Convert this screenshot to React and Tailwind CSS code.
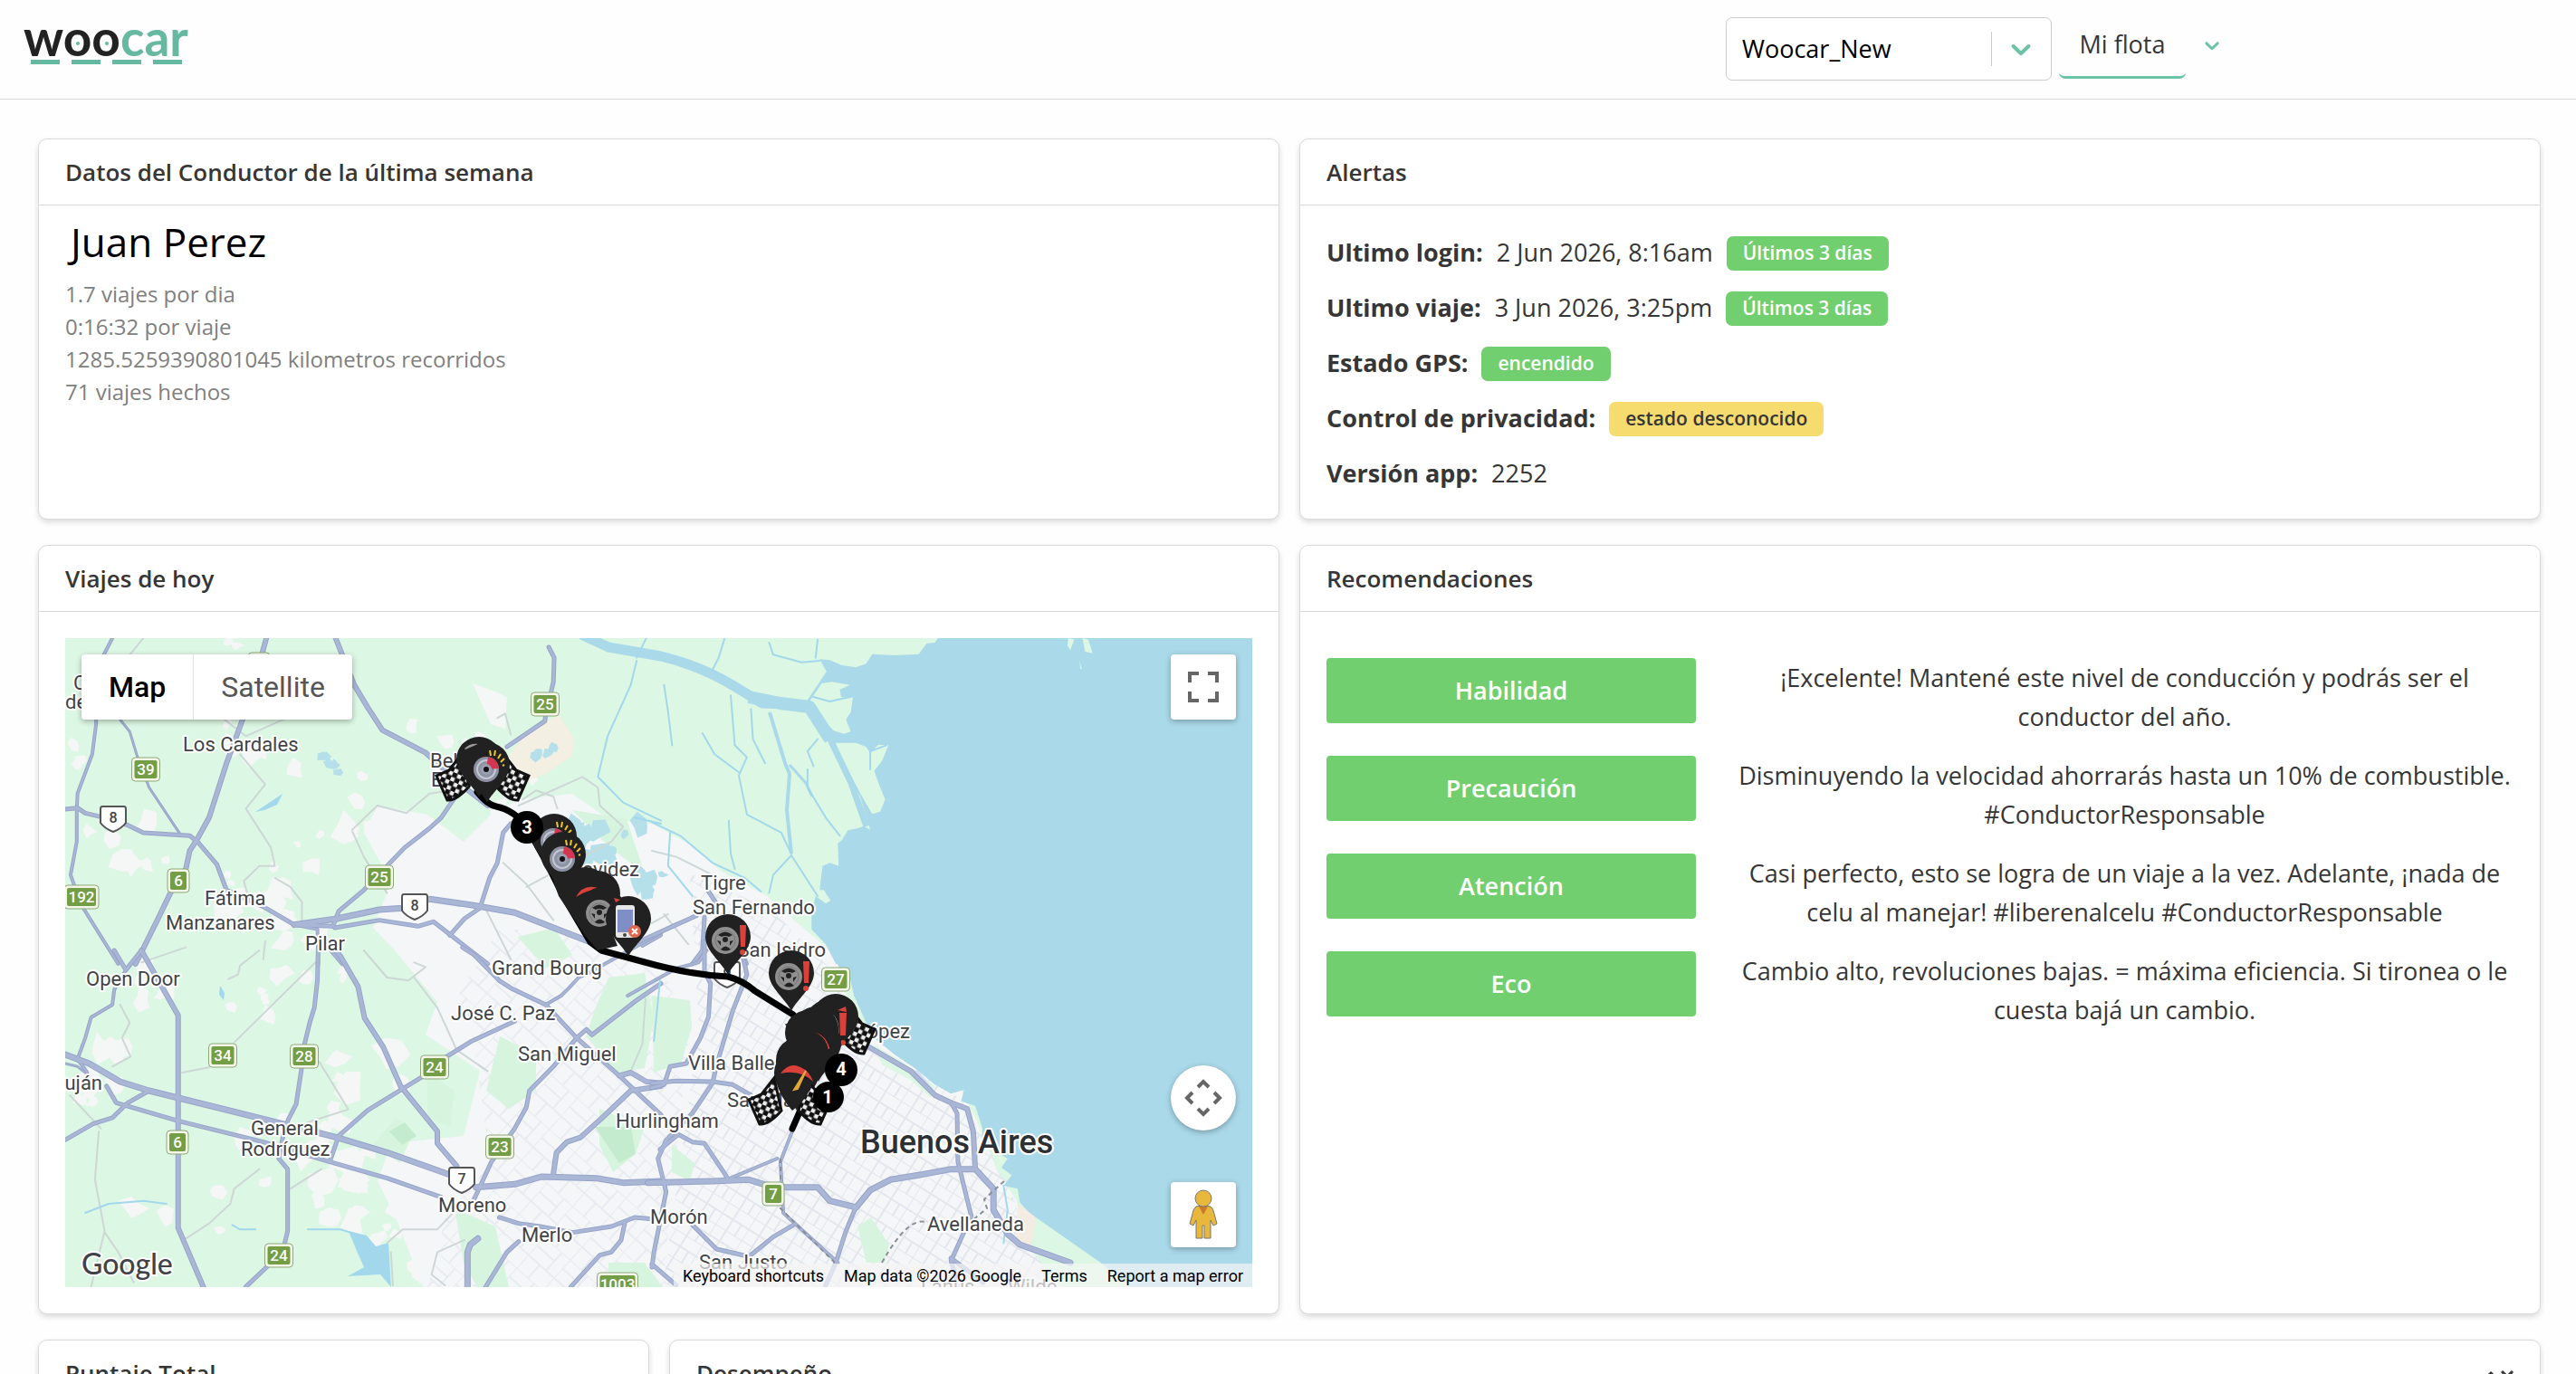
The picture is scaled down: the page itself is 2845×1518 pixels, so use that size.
import { useState } from "react";
import { clsx } from "clsx";

const BADGE_STYLES = {
  success: "bg-[#72cf6f] text-white",
  warning: "bg-[#f6dc6f] text-[#363636]",
};

const ALERTS = [
  { label: "Ultimo login:", value: "2 Jun 2026, 8:16am", badge: "Últimos 3 días", tone: "success" },
  { label: "Ultimo viaje:", value: "3 Jun 2026, 3:25pm", badge: "Últimos 3 días", tone: "success" },
  { label: "Estado GPS:", badge: "encendido", tone: "success" },
  { label: "Control de privacidad:", badge: "estado desconocido", tone: "warning" },
  { label: "Versión app:", value: "2252" },
];

const TIPS = [
  { name: "Habilidad", text: "¡Excelente! Mantené este nivel de conducción y podrás ser el conductor del año." },
  { name: "Precaución", text: "Disminuyendo la velocidad ahorrarás hasta un 10% de combustible. #ConductorResponsable" },
  { name: "Atención", text: "Casi perfecto, esto se logra de un viaje a la vez. Adelante, ¡nada de celu al manejar! #liberenalcelu #ConductorResponsable" },
  { name: "Eco", text: "Cambio alto, revoluciones bajas. = máxima eficiencia. Si tironea o le cuesta bajá un cambio." },
];

const DRIVER_STATS = [
  "1.7 viajes por dia",
  "0:16:32 por viaje",
  "1285.5259390801045 kilometros recorridos",
  "71 viajes hechos",
];

// The map is drawn as four tiles, each with its own local units.
const TILE = {
  nw: "matrix(0.4273 0 0 0.3333 -12 -15)",
  sw: "matrix(0.4273 0 0 0.3333 -12 345)",
  ne: "matrix(0.4464 0 0 0.3333 648 -15)",
  se: "matrix(0.4464 0 0 0.3333 648 345)",
};

// [points, width]
const HIGHWAYS = {
  nw: [
    ["150,45 108,150 108,330 98,430 60,560 58,610 58,720 42,830 70,930 165,1125", 4],
    ["170,315 195,355 215,440 245,540 328,700", 3],
    ["548,45 530,130 488,310 445,460 400,640 370,710 350,750 340,810 300,890 270,970 210,1125", 6],
    ["28,612 60,608 80,625 130,640 190,665 230,690 350,700 370,720 420,795 445,880 540,935 620,995 720,1000", 5],
    ["727,45 775,200 810,275 848,350 960,425 1060,540 1120,600", 6],
    ["1278,75 1292,110 1290,190 1270,300 1268,320 1170,405", 5],
    ["1050,545 1000,640 970,675 905,740 860,800 800,880 735,950 720,1000", 5],
    ["1180,660 1160,690 1145,790 1125,840 1100,940 1060,975 1022,1030", 5],
    ["620,995 730,975 840,945 900,940 970,910 1080,930 1190,955 1400,1060", 7],
    ["725,1005 840,980 940,1000 980,985 1025,1030 1120,1125", 5],
    ["682,1125 680,1010 620,995", 4],
    ["745,1125 715,1080", 5],
    ["1568,1030 1520,1065", 4],
  ],
  sw: [
    ["682,-10 680,100 672,190 660,240 645,320 638,400 625,510 605,560 595,590 580,690 603,725 603,930 590,1000 495,1115", 5],
    ["720,-10 740,20 785,120 802,225 850,320 895,450 990,600 990,640 1040,715", 6],
    ["225,0 320,215 320,920 385,1115", 6],
    ["155,0 185,65 225,0", 5],
    ["185,65 155,130 150,180 95,222 80,290 60,360 85,405", 4],
    ["28,345 90,375 170,435 245,465 590,575 730,620 860,670 1025,745", 7],
    ["28,375 60,385 80,405", 3],
    ["135,450 160,505 320,565 540,635 710,700 860,755 1000,818", 5],
    ["28,628 100,575 150,555 190,505 245,465", 5],
    ["712,700 735,615 810,530 950,420 1010,355 1080,300 1190,235", 5],
    ["1055,-10 1085,15 1150,100 1180,125 1270,180 1350,290 1460,415 1568,545", 5],
    ["1270,180 1310,150 1330,125 1355,90 1380,75 1430,40 1570,-60", 4],
    ["1568,110 1500,170 1390,280 1375,262 1350,290 1290,385 1228,465 1220,520 1190,590 1130,700 1085,825", 5],
    ["1090,785 1190,775 1260,750 1400,755 1470,770 1568,765", 7],
    ["1568,450 1490,465 1420,550 1360,620 1325,635 1298,670 1290,738", 6],
    ["1150,885 1200,905 1255,915 1340,935 1440,915 1500,885 1568,893", 5],
    ["1475,900 1465,960 1440,1000 1410,1010 1335,1115", 5],
    ["1095,955 1075,975 1068,1000 1068,1115", 7],
    ["1200,965 1170,1000 1115,1115", 5],
    ["1460,415 1490,405 1530,435 1568,440", 6],
  ],
  ne: [
    ["-30,1050 60,995 110,965", 5],
    ["140,885 160,925", 5],
    ["130,970 125,1080 100,1125", 5],
    ["215,1060 235,1125", 4],
  ],
  se: [
    ["0,440 60,433 150,435 200,445 245,480", 5],
    ["130,-30 130,70 145,110 140,220 120,290 85,375 45,385 30,445 0,455", 5],
    ["-60,150 60,60 115,40 135,0", 4],
    ["220,-10 235,80 200,200 160,380 150,440 100,540 35,630 15,690 35,800 5,1000 0,1050", 5],
    ["-10,770 150,765 240,760 300,785 410,785 440,830 505,852 540,795 590,760 660,745 740,725 800,725 845,790 845,860 880,940 910,975 1035,1035", 7],
    ["800,725 795,600 780,525 740,505 700,480 640,400 530,315 480,260", 6],
    ["740,505 755,540 757,700 790,880 740,1030 760,1115", 5],
    ["350,590 318,700 325,870 460,1035", 4],
    ["505,850 480,930 455,1035 430,1110", 5],
    ["350,910 300,950 240,1015 160,990 100,910", 5],
    ["185,760 310,690", 4],
    ["20,660 65,610 100,635 130,640 190,760", 5],
    ["0,1040 60,1110", 5],
    ["740,1020 820,1100", 5],
  ],
};

const MINOR_ROADS = {
  nw: [
    "230,45 195,100",
    "440,315 495,370 600,310",
    "480,430 545,530 495,610 530,680 560,740 570,800 530,800 490,850 500,900",
    "570,840 610,870 640,920 640,980",
    "770,680 835,600 910,625 970,560 1050,545",
    "770,685 800,770 860,890",
    "1200,600 1365,505 1405,540 1410,600 1470,670 1440,720 1220,870",
    "1210,580 1245,550 1290,570 1300,610",
    "1145,310 1165,295 1180,365",
    "1160,790 1220,860 1290,980",
    "1110,930 1180,1110",
    "540,1110 545,1050",
  ],
  sw: [
    "225,40 340,-10",
    "450,95 475,80 480,50 530,0",
    "675,40 465,305",
    "400,388 330,405",
    "170,180 195,240 175,290 197,352 150,385",
    "685,370 760,527 655,570",
    "530,725 465,790 455,840 400,905 340,955",
    "690,725 610,790",
    "115,600 105,760 130,930 95,1115",
    "130,935 165,1000 205,1100",
    "800,0 860,90 915,100 960,55 930,40",
    "930,90 990,190 1040,330 1120,400",
    "860,970 900,925 990,925 1060,830",
    "875,1110 870,1000",
    "1010,1110 975,1075 990,1000 1060,960",
    "1528,160 1520,310 1490,400",
    "40,480 120,590",
  ],
  ne: ["0,750 60,770 150,830", "30,960 90,1060", "0,990 40,960"],
  se: [],
};

const CREEKS = {
  nw: ["1505,120 1490,200 1430,370 1405,505 1470,590 1568,650", "1530,45 1505,110", "1568,660 1500,640"],
  sw: ["80,870 140,840 230,830 290,840", "460,910 480,925 520,925", "655,925 740,925 800,950"],
  ne: [
    "180,45 165,110 150,150",
    "290,60 300,100 370,125 415,120",
    "410,50 405,110",
    "195,235 205,400 235,440 215,500 235,630 320,690 345,760",
    "245,280 250,380 280,460",
    "125,360 155,430 215,490",
    "385,480 385,540 430,640 465,700",
    "410,380 385,420 400,470",
    "345,765 300,830 290,890",
    "345,765 410,900",
    "0,655 70,700 150,790 230,840 270,885",
    "190,650 195,760 205,810",
    "400,240 440,255 490,240",
    "540,480 540,420 580,400",
    "45,690 40,800 100,900",
    "30,200 40,290 50,400",
  ],
  se: ["870,780 880,860 870,970", "20,100 5,300"],
};

const GREEN_SHIELDS = [
  ["25", 530, 73], ["39", 89, 145], ["6", 125, 268], ["192", 18, 286], ["25", 347, 264],
  ["34", 174, 461], ["28", 264, 462], ["24", 408, 474], ["6", 124, 557], ["23", 480, 562],
  ["24", 236, 682], ["1003", 610, 714], ["27", 851, 377], ["7", 782, 614], ["9", 214, 29],
];

const WHITE_SHIELDS = [["8", 53, 198], ["8", 386, 295], ["7", 438, 597], ["9", 731, 370]];

const PLACES = [
  ["C", 9, 57], ["de", 0, 78], ["Los Cardales", 130, 125], ["Fátima", 154, 295],
  ["Manzanares", 111, 322], ["Pilar", 265, 345], ["Belén de", 403, 143], ["Escobar", 404, 164],
  ["Benavidez", 634, 263, "end"], ["Tigre", 702, 278], ["San Fernando", 693, 305],
  ["San Isidro", 840, 352, "end"], ["Open Door", 23, 384], ["Luján", 41, 499, "end"],
  ["General", 205, 549], ["Rodríguez", 194, 572], ["José C. Paz", 426, 422],
  ["Grand Bourg", 471, 372], ["San Miguel", 500, 467], ["Hurlingham", 608, 541],
  ["Moreno", 412, 634], ["Merlo", 504, 667], ["Morón", 646, 647], ["Villa Ballester", 688, 477],
  ["San Martín", 731, 518], ["Vicente López", 933, 442, "end"], ["Avellaneda", 952, 655],
  ["San Justo", 700, 697], ["Lanús", 945, 724], ["Wilde", 1041, 724],
];

// Built-up spots scattered over the countryside: [cx, cy, spread, count]
const TOWNS = [
  [205, 110, 26, 7], [70, 240, 45, 9], [215, 290, 40, 9], [300, 180, 50, 8], [370, 260, 50, 10],
  [30, 480, 45, 12], [90, 380, 30, 6], [250, 560, 55, 12], [300, 590, 50, 10], [270, 350, 40, 9],
  [420, 130, 45, 7], [480, 160, 40, 7], [180, 20, 20, 4], [20, 130, 15, 3], [330, 500, 50, 5],
  [200, 400, 30, 4], [260, 250, 40, 6], [120, 620, 50, 4], [340, 630, 50, 9], [380, 680, 40, 10],
];

// Parks over the urban area
const PARKS = [
  "600,375 640,370 650,420 640,475 610,480 575,440 585,410",
  "648,395 690,400 692,430 680,470 650,480",
  "590,520 640,540 630,570 605,590 590,560",
  "500,330 540,320 560,350 530,365",
  "560,190 620,200 640,260 600,230",
  "430,630 475,650 490,717 455,717 440,690",
  "340,560 365,530 385,545 370,580",
  "600,690 640,690 660,717 600,717",
  "875,650 890,640 910,670 905,690 885,690",
  "670,560 695,580 690,600 670,590",
  "480,440 520,460 520,500 490,520 465,500",
  "400,480 430,500 425,540 400,530",
];

function seeded(seed) {
  let s = seed;
  return () => {
    s = (s * 16807) % 2147483647;
    return s / 2147483647;
  };
}

function makeBlobs(clusters, seed) {
  const rnd = seeded(seed);
  return clusters.flatMap(([cx, cy, spread, count]) =>
    Array.from({ length: count }, () => {
      const x = cx + (rnd() - 0.5) * spread * 2;
      const y = cy + (rnd() - 0.5) * spread * 1.6;
      const r = 4 + rnd() * spread * 0.25;
      return Array.from({ length: 7 }, (_, i) => {
        const a = (i / 7) * Math.PI * 2;
        const k = r * (0.5 + rnd());
        return `${(x + Math.cos(a) * k).toFixed(1)},${(y + Math.sin(a) * k).toFixed(1)}`;
      }).join(" ");
    })
  );
}

const TOWN_BLOBS = makeBlobs(TOWNS, 77);
const LAGOONS = makeBlobs([[600, 230, 40, 12], [650, 270, 22, 9], [298, 140, 12, 5], [530, 122, 10, 5]], 41);

const URBAN =
  "330,215 345,185 400,195 440,225 470,195 500,178 560,172 600,200 648,205 690,228 725,258 775,285 815,320 850,350 870,420 930,470 990,500 1010,540 1030,590 1050,620 1070,680 1100,717 395,717 365,640 345,600 360,558 440,550 458,478 398,438 411,402 364,345 340,320 360,270";

function Chevron({ className }) {
  return (
    <svg viewBox="0 0 20 20" fill="currentColor" aria-hidden="true" className={className}>
      <path d="M4.516 7.548c0.436-0.446 1.043-0.481 1.576 0l3.908 3.747 3.908-3.747c0.533-0.481 1.141-0.446 1.574 0 0.436 0.445 0.408 1.197 0 1.615-0.406 0.418-4.695 4.502-4.695 4.502-0.217 0.223-0.502 0.335-0.787 0.335s-0.57-0.112-0.789-0.335c0 0-4.287-4.084-4.695-4.502s-0.436-1.17 0-1.615z" />
    </svg>
  );
}

function Logo() {
  return (
    <svg viewBox="0 -24 188 68" className="w-[188px] h-[68px]" role="img" aria-label="woocar">
      <text x="0" y="33" fontSize="55" fontWeight="700" className="font-['Lato',sans-serif]">
        <tspan fill="#222">woo</tspan>
        <tspan fill="#66b8a0">car</tspan>
      </text>
      <circle cx="60" cy="19" r="2" fill="#66b8a0" />
      <circle cx="92" cy="19" r="2" fill="#66b8a0" />
      {[8, 53, 98, 143].map((x) => (
        <rect key={x} x={x} y="37" width="32" height="5" fill="#66b8a0" />
      ))}
    </svg>
  );
}

function Header() {
  const [account, setAccount] = useState("Woocar_New");

  return (
    <header className="flex items-start justify-between h-[110px] border-b border-[#dbdbdb] pl-[26px] pr-[389px]">
      <a href="#inicio" className="pt-[5px]">
        <Logo />
      </a>
      <div className="flex items-start">
        <div className="relative mt-[19px]">
          <select
            aria-label="Cuenta"
            value={account}
            onChange={(e) => setAccount(e.target.value)}
            className="appearance-none w-[360px] h-[70px] rounded-[7px] border border-[#ccc] bg-white pl-[17px] pr-20 text-[27px] text-black"
          >
            <option>Woocar_New</option>
          </select>
          <span className="pointer-events-none absolute right-[66px] top-4 h-[38px] border-l border-[#ccc]" />
          <Chevron className="pointer-events-none absolute right-4 top-[17px] size-9 text-[#6cc3a5]" />
        </div>
        <nav className="flex items-start ml-[8px]">
          <a href="#mi-flota" className="flex items-center justify-center w-[140px] h-[72px] mt-[15px] rounded-[7px] border-b-[3px] border-[#6cc3a5] text-[27px] text-[#363636]">
            Mi flota
          </a>
          <button type="button" aria-label="Abrir menú" className="ml-4 mt-[37px]">
            <Chevron className="size-[26px] text-[#6cc3a5]" />
          </button>
        </nav>
      </div>
    </header>
  );
}

function Card({ title, actions, className, bodyClassName, children }) {
  return (
    <section className={clsx("flex flex-col rounded-[10px] border border-[#dbdbdb] bg-white shadow-[0_3px_6px_rgba(0,0,0,0.14)]", className)}>
      <div className="flex items-center justify-between h-[73px] shrink-0 border-b border-[#dbdbdb] px-[29px]">
        <h2 className="text-[26px] leading-[43px] font-semibold text-[#363636]">{title}</h2>
        {actions}
      </div>
      <div className={clsx("grow", bodyClassName)}>{children}</div>
    </section>
  );
}

function Roads({ tile }) {
  return (
    <g transform={TILE[tile]} fill="none" strokeLinejoin="round" strokeLinecap="round">
      {MINOR_ROADS[tile].map((p) => (
        <polyline key={p} points={p} stroke="#cdd8d6" strokeWidth="2" className="[vector-effect:non-scaling-stroke]" />
      ))}
      {CREEKS[tile].map((p) => (
        <polyline key={p} points={p} stroke="#a3d8ec" strokeWidth="2" className="[vector-effect:non-scaling-stroke]" />
      ))}
      {HIGHWAYS[tile].map(([p, w]) => (
        <polyline key={p} points={p} stroke="#97a4c9" strokeWidth={w} className="[vector-effect:non-scaling-stroke]" />
      ))}
      {HIGHWAYS[tile].map(([p, w]) => (
        <polyline key={p} points={p} stroke="#a9b6d5" strokeWidth={w - 2} className="[vector-effect:non-scaling-stroke]" />
      ))}
    </g>
  );
}

// A pin whose tip stands on x, y. The kind chooses what is drawn in its head.
function Pin({ x, y, kind }) {
  return (
    <g transform={`translate(${x} ${y})`}>
      <path d="M0 0 C-5 -12 -25 -26 -25 -42 A25 25 0 0 1 25 -42 C25 -26 5 -12 0 0Z" fill="#212121" />
      {kind === "brake" && (
        <g>
          <circle cx="-1" cy="-37" r="14" fill="#8d93a3" />
          <circle cx="-1" cy="-37" r="10" fill="none" stroke="#c3c7d2" strokeWidth="2" />
          <path d="M-1 -37 L1 -51 A14 14 0 0 1 13 -38Z" fill="#d5364f" />
          <circle cx="-1" cy="-37" r="6" fill="#9aa1b2" />
          <circle cx="-1" cy="-37" r="3" fill="#111" />
          <path d="M4 -52 l-1 -6 M8 -52 l1 -6 M12 -49 l3 -5 M15 -45 l4 -4 M17 -41 l2 -1" stroke="#eec62c" strokeWidth="2" />
        </g>
      )}
      {(kind === "wheel" || kind === "turn") && (
        <g>
          <circle cx="-3" cy="-38" r="15" fill="#8f8f8f" />
          <circle cx="-3" cy="-38" r="11" fill="none" stroke="#777" strokeWidth="1" />
          <path d="M-11 -44 Q-3 -51 5 -44 L1 -42 Q-3 -44 -7 -42Z M-12 -38 l4 1 v5Z M6 -38 l-4 1 v5Z" fill="#212121" />
          <path d="M-8 -28 Q-3 -35 3 -28 Q-3 -25 -8 -28Z" fill="#212121" />
          <circle cx="-3" cy="-39" r="3" fill="#212121" />
        </g>
      )}
      {kind === "wheel" && (
        <g fill="#d9413a">
          <path d="M13 -55 h7 l-1 24 h-5Z" />
          <circle cx="16" cy="-25" r="3" />
        </g>
      )}
      {kind === "phone" && (
        <g>
          <rect x="-14" y="-57" width="21" height="36" rx="3" fill="#e6e6e6" />
          <rect x="-12" y="-52" width="17" height="25" fill="#7f8ec6" />
          <circle cx="-4" cy="-24" r="2" fill="#444" />
          <circle cx="7" cy="-28" r="7" fill="#e2674f" />
          <path d="M4 -31 l6 6 M10 -31 l-6 6" stroke="#fff" strokeWidth="2" />
        </g>
      )}
    </g>
  );
}

function Flag({ x, y, flip }) {
  return (
    <g transform={`translate(${x} ${y})`}>
      <path
        d={flip ? "M0 -24 L14 -6 L28 0 L16 27 Q6 28 -8 12Z" : "M0 -24 L-14 -6 L-28 0 L-16 27 Q-6 28 8 12Z"}
        fill="url(#checks)"
        stroke="#111"
        strokeWidth="3"
      />
    </g>
  );
}

function MapDrawing() {
  return (
    <svg viewBox="0 0 1311 717" preserveAspectRatio="xMidYMid slice" className="w-full h-full font-['Roboto',sans-serif]" role="img" aria-label="Recorrido de los viajes">
      <defs>
        <pattern id="checks" width="10" height="10" patternUnits="userSpaceOnUse" patternTransform="rotate(24)">
          <rect width="10" height="10" fill="#eee" />
          <path d="M0 0h5v5H0Z M5 5h5v5H5Z" fill="#111" stroke="#111" />
        </pattern>
        <pattern id="suburb" width="46" height="38" patternUnits="userSpaceOnUse" patternTransform="rotate(-48)">
          <path d="M0 0H46 M0 0V38 M20 0V38 M0 17H20 M20 26H46 M34 0V26" stroke="#e8ebf0" strokeWidth="2" fill="none" />
        </pattern>
        <pattern id="city" width="34" height="28" patternUnits="userSpaceOnUse" patternTransform="rotate(32)">
          <path d="M0 0H34 M0 0V28 M14 0V28 M0 14H34 M25 14V28" stroke="#e3e7ed" strokeWidth="2" fill="none" />
        </pattern>
      </defs>

      <rect width="1311" height="717" fill="#dcf7e3" />
      {TOWN_BLOBS.map((p) => (
        <polygon key={p} points={p} fill="#f5f6f6" />
      ))}
      <polygon points={URBAN} fill="#f5f6f8" />
      <polygon points="505,110 525,95 545,85 562,110 560,130 530,150 505,160 490,130" fill="#f3efe2" />
      <polygon points="450,50 472,58 488,65 486,100 470,95" fill="#f5f6f6" />
      <polygon points="480,320 560,330 660,370 690,430 660,717 400,717 420,640 470,580 450,440 430,400" fill="url(#suburb)" />
      <polygon points="690,260 780,300 850,370 880,440 990,510 1040,600 1070,680 1100,717 660,717 700,430" fill="url(#city)" />
      {PARKS.map((p) => (
        <polygon key={p} points={p} fill="#d7f5de" />
      ))}
      <polygon points="358,545 375,535 388,550 372,560" fill="#c5ebcf" />
      <polygon points="585,540 625,540 630,570 612,580" fill="#c5ebcf" />

      {/* reservoir and lagoons */}
      <path d="M313 655 l20 5 10 12 14 -4 3 49 -12 -14 -36 2 18 -10 -8 -18z" fill="#a3d8ec" />
      <path d="M210 192 l18 -12 12 -8 -6 12 -14 6z M171 384 l5 8 -1 8 -5 -6z" fill="#a3d8ec" />
      {LAGOONS.map((p) => (
        <polygon key={p} points={p} fill="#b5e0ea" />
      ))}

      {/* Río de la Plata */}
      <g fill="#aad9ea">
        <polygon
          transform={TILE.ne}
          points="708,45 700,60 680,62 660,98 600,102 545,98 530,130 505,142 470,135 440,118 415,115 432,155 410,200 385,250 385,270 430,370 445,395 480,490 515,570 540,680 525,668 510,675 485,682 470,715 460,725 462,800 440,790 422,800 415,880 425,880 442,915 430,925 405,900 395,960 395,1010 430,1060 455,1125 1490,1125 1490,45"
        />
        <polygon
          transform={TILE.se}
          points="430,-30 465,60 488,80 500,150 530,240 545,285 600,345 650,390 700,445 740,475 772,462 765,500 800,515 818,590 815,640 880,690 865,720 890,745 870,780 905,790 910,835 940,880 1000,940 1110,1035 1190,1120 1490,1120 1490,-30"
        />
      </g>
      <g transform={TILE.ne} fill="#dcf7e3">
        <polygon points="385,265 400,235 420,195 445,190 490,200 465,215 468,240 497,242 492,290 480,315 492,355 475,362 450,352" />
        <polygon points="448,392 505,392 530,405 540,425 560,398 585,400 570,450 550,485 562,530 577,580 565,620 545,628 520,570 480,470" />
        <polygon points="1030,45 1045,50 1035,85 1028,70" />
        <polygon points="1065,45 1080,50 1090,95 1072,90" />
        <polygon points="1058,120 1064,148 1060,146" />
      </g>
      <g transform={TILE.se}>
        <polygon points="905,840 950,885 940,980 900,960" fill="#f3ece2" />
        <polygon points="950,885 1110,1035 1040,1035 940,980" fill="#dcf7e3" />
        <polygon points="545,310 620,370 700,450 690,490 640,430 570,380" fill="#dcf7e3" />
        <polygon points="635,390 660,400 695,460 690,470" fill="#d5dcf3" />
      </g>
      <g fill="none" stroke="#aad9ea" strokeLinejoin="round">
        <path d="M570 -4 L600 10 L658 20 Q700 30 737 52 L770 72 L820 74" strokeWidth="11" />
        <path d="M755 65 L790 72 L822 76 L845 112" strokeWidth="14" />
        <path d="M778 82 L795 138 L800 150 L797 190 L802 238" strokeWidth="4" />
        <path d="M800 140 L818 160 L825 175" strokeWidth="3" />
        <path d="M845 112 L868 160 L885 208" strokeWidth="7" />
      </g>

      {["nw", "sw", "ne", "se"].map((tile) => (
        <Roads key={tile} tile={tile} />
      ))}
      <path d="M902 690 Q930 640 950 645 M1037 600 L1015 620 L1018 630 L1000 645 M790 575 L790 630 L850 690" fill="none" stroke="#8a8f99" strokeWidth="2" strokeDasharray="5 4" />

      {GREEN_SHIELDS.map(([n, x, y]) => {
        const w = 17 + n.length * 7;
        return (
          <g key={`${n}-${x}`}>
            <rect x={x - w / 2} y={y - 13} width={w} height="26" rx="4" fill="#f4f6ea" stroke="#8ea978" />
            <rect x={x - w / 2 + 3} y={y - 10} width={w - 6} height="20" rx="2" fill="#739e45" />
            <text x={x} y={y + 6} textAnchor="middle" fontSize="17" fontWeight="500" fill="#fff">{n}</text>
          </g>
        );
      })}
      {WHITE_SHIELDS.map(([n, x, y]) => (
        <g key={`${n}-${x}`}>
          <path d={`M${x - 12} ${y - 12} h24 q2 0 2 3 v15 q-4 6 -14 10 q-10 -4 -14 -10 v-15 q0 -3 2 -3z`} fill="#fff" stroke="#555" strokeWidth="2" />
          <text x={x} y={y + 6} textAnchor="middle" fontSize="16" fontWeight="500" fill="#444">{n}</text>
        </g>
      ))}

      <g fontSize="22" fill="#3f4347" stroke="#fff" strokeWidth="4" strokeLinejoin="round" paintOrder="stroke">
        {PLACES.map(([name, x, y, anchor]) => (
          <text key={name} x={x} y={y} textAnchor={anchor || "start"}>{name}</text>
        ))}
        <text x="878" y="569" fontSize="36" fontWeight="500" fill="#2c3035">Buenos Aires</text>
        <text x="18" y="703" fontSize="32" fontWeight="500" className="font-['Lato',sans-serif]">Google</text>
      </g>

      {/* trips of the day */}
      <Flag x="438" y="152" />
      <Flag x="484" y="152" flip />
      <path
        d="M455 170 Q466 184 476 186 Q496 190 510 209 L530 245 L550 285 L580 336 L592 345 L640 358 Q690 372 732 374 Q748 378 762 390 L804 416 L822 440 M830 480 L803 542"
        fill="none"
        stroke="#000"
        strokeWidth="7"
        strokeLinecap="round"
        strokeLinejoin="round"
      />
      <polygon points="520,215 590,290 610,340 588,345 575,330 545,285" fill="#212121" />
      <Pin x="457" y="176" />
      <path d="M441 122 Q447 116 456 117 L442 123Z" fill="#9a9a9a" />
      <Pin x="466" y="182" kind="brake" />
      <Pin x="540" y="261" kind="brake" />
      <Pin x="550" y="281" kind="brake" />
      <Pin x="575" y="320" />
      <Pin x="588" y="324" />
      <path d="M564 286 Q573 270 591 277 Q576 278 564 286Z" fill="#d9413a" />
      <Pin x="593" y="342" kind="turn" />
      <Pin x="622" y="352" kind="phone" />
      <path d="M606 287 l7 2 -5 3z" fill="#d9413a" />
      <Pin x="732" y="372" kind="wheel" />
      <Pin x="802" y="412" kind="wheel" />

      <Flag x="866" y="432" flip />
      <Pin x="851" y="460" />
      <Pin x="843" y="466" />
      <path d="M847 415 Q856 422 854 440 Q855 424 847 415Z" fill="#bbb" />
      <path d="M855 414 h8 l-1 25 h-6z M853 411 l9 -4 1 6z" fill="#d9413a" />
      <circle cx="859" cy="447" r="3" fill="#d9413a" />
      <Pin x="829" y="474" />
      <Pin x="832" y="490" />
      <Pin x="820" y="478" />
      <path d="M818 436 Q838 435 843 454" fill="none" stroke="#d9413a" strokeWidth="3" />
      <Pin x="818" y="500" />
      <Pin x="810" y="508" />
      <Pin x="808" y="522" />
      <Flag x="783" y="510" />
      <Flag x="818" y="510" flip />
      <path d="M784 487 L826 487 Q822 508 803 522 Q790 508 784 487Z" fill="#212121" />
      <path d="M790 481 Q800 468 812 474 Q822 478 826 490 Q812 476 790 481Z" fill="#d9413a" />
      <path d="M818 478 L805 499 l4 -1z" fill="#e0a83a" stroke="#e0a83a" strokeWidth="2" />
      <circle cx="857" cy="477" r="18" />
      <circle cx="843" cy="507" r="17" />
      <text x="857" y="483" textAnchor="middle" fontSize="20" fontWeight="700" fill="#fff">4</text>
      <text x="842" y="514" textAnchor="middle" fontSize="20" fontWeight="700" fill="#fff">1</text>
      <circle cx="510" cy="209" r="18" />
      <text x="510" y="216" textAnchor="middle" fontSize="20" fontWeight="700" fill="#fff">3</text>
    </svg>
  );
}

const controlBase = "absolute right-[18px] size-[72px] flex items-center justify-center bg-white shadow-[0_2px_6px_rgba(0,0,0,0.3)]";

function TripsMap() {
  const [type, setType] = useState("Map");

  return (
    <div className="relative h-[717px] overflow-hidden font-['Roboto',sans-serif]">
      <MapDrawing />
      <div className="absolute left-[18px] top-[18px] flex h-[72px] rounded-[4px] bg-white shadow-[0_2px_6px_rgba(0,0,0,0.3)]">
        {["Map", "Satellite"].map((name) => (
          <button
            key={name}
            type="button"
            onClick={() => setType(name)}
            className={clsx(
              "px-[30px] text-[32px] not-first:border-l not-first:border-[#e6e6e6]",
              type === name ? "font-medium text-black" : "text-[#565656]"
            )}
          >
            {name}
          </button>
        ))}
      </div>
      <button type="button" aria-label="Pantalla completa" className={clsx(controlBase, "top-[18px] rounded-[4px]")}>
        <svg viewBox="0 0 34 34" className="size-[34px]" fill="none" stroke="#666" strokeWidth="4">
          <path d="M2 12V2H12 M22 2H32V12 M32 22V32H22 M12 32H2V22" />
        </svg>
      </button>
      <button type="button" aria-label="Controles de cámara" className={clsx(controlBase, "top-[472px] rounded-full")}>
        <svg viewBox="0 0 44 44" className="size-[44px]" fill="none" stroke="#666" strokeWidth="4">
          <path d="M16 10 L22 4 L28 10 M16 34 L22 40 L28 34 M10 16 L4 22 L10 28 M34 16 L40 22 L34 28" />
        </svg>
      </button>
      <button type="button" aria-label="Street View" className={clsx(controlBase, "top-[601px] rounded-[4px]")}>
        <svg viewBox="0 0 32 56" className="w-8 h-14" fill="#e8b83c" stroke="#777" strokeWidth="1">
          <path d="M8 19 Q16 16 24 19 Q27 21 28 27 L31 38 L27 40 L24 34 V54 H17 V40 H15 V54 H8 V34 L5 40 L1 38 L4 27 Q5 21 8 19Z" />
          <path d="M11 19 H21 L16 28Z" fill="#c97b2b" stroke="none" />
          <ellipse cx="16" cy="10" rx="9" ry="9" />
        </svg>
      </button>
      <div className="absolute right-0 bottom-0 flex items-center gap-[22px] h-[26px] px-[10px] bg-[#f5f5f5]/70 text-[18px] text-black">
        <button type="button">Keyboard shortcuts</button>
        <span>Map data ©2026 Google</span>
        <a href="#terms">Terms</a>
        <a href="#report">Report a map error</a>
      </div>
    </div>
  );
}

function AlertRow({ label, value, badge, tone }) {
  return (
    <li className="flex items-center gap-[15px] h-[61px] text-[27px] text-[#363636]">
      <strong className="font-bold">{label}</strong>
      {value && <span>{value}</span>}
      {badge && (
        <span className={clsx("inline-flex items-center h-[38px] px-[18px] rounded-[7px] text-[21px] font-semibold", BADGE_STYLES[tone])}>
          {badge}
        </span>
      )}
    </li>
  );
}

export default function App() {
  return (
    <div className="h-screen overflow-hidden bg-[#fefefe] font-['Open_Sans',sans-serif]">
      <Header />
      <main className="pt-[43px] pl-[42px] pr-[39px] flex flex-col gap-[28px]">
        <div className="grid grid-cols-2 gap-[22px]">
          <Card title="Datos del Conductor de la última semana" className="min-h-[421px]" bodyClassName="px-[29px] pt-[10px]">
            <p className="pl-[6px] text-[44px] leading-[60px] text-black">Juan Perez</p>
            <ul className="pt-[10px] text-[24px] leading-[36px] text-[#808080]">
              {DRIVER_STATS.map((line) => (
                <li key={line}>{line}</li>
              ))}
            </ul>
          </Card>
          <Card title="Alertas" className="min-h-[421px]" bodyClassName="px-[29px] pt-[22px]">
            <ul>
              {ALERTS.map((a) => (
                <AlertRow key={a.label} {...a} />
              ))}
            </ul>
          </Card>
        </div>
        <div className="grid grid-cols-2 gap-[22px]">
          <Card title="Viajes de hoy" bodyClassName="p-[29px]">
            <TripsMap />
          </Card>
          <Card title="Recomendaciones" bodyClassName="px-[29px] pt-[51px] flex flex-col gap-[22px]">
            {TIPS.map((tip) => (
              <div key={tip.name} className="flex items-start gap-[44px]">
                <button type="button" className="w-[408px] h-[72px] shrink-0 rounded-[4px] bg-[#72cf6f] text-[27px] font-semibold text-white">
                  {tip.name}
                </button>
                <p className="grow text-center text-[27px] leading-[43px] text-[#363636]">{tip.text}</p>
              </div>
            ))}
          </Card>
        </div>
        <div className="flex gap-[22px]">
          <Card title="Puntaje Total" className="w-[675px] h-[400px] shrink-0" />
          <Card
            title="Desempeño"
            className="grow h-[400px]"
            actions={
              <div className="flex items-center gap-1 pt-2">
                <button type="button" aria-label="Contraer">
                  <svg viewBox="0 0 14 14" className="size-[14px]" fill="none" stroke="#363636" strokeWidth="3">
                    <path d="M1 9 L7 3 L13 9" />
                  </svg>
                </button>
                <button type="button" aria-label="Cerrar">
                  <svg viewBox="0 0 14 14" className="size-[14px]" fill="none" stroke="#363636" strokeWidth="3">
                    <path d="M1 1 L13 13 M13 1 L1 13" />
                  </svg>
                </button>
              </div>
            }
          />
        </div>
      </main>
    </div>
  );
}
